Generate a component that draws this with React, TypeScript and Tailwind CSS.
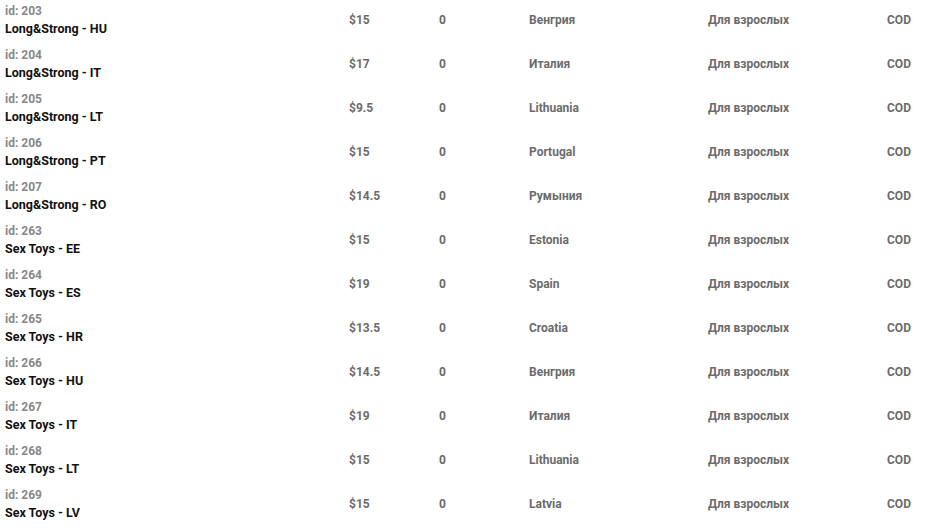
const rows = [
  { id: 203, name: "Long&Strong - HU", price: "$15", country: "Венгрия" },
  { id: 204, name: "Long&Strong - IT", price: "$17", country: "Италия" },
  { id: 205, name: "Long&Strong - LT", price: "$9.5", country: "Lithuania" },
  { id: 206, name: "Long&Strong - PT", price: "$15", country: "Portugal" },
  { id: 207, name: "Long&Strong - RO", price: "$14.5", country: "Румыния" },
  { id: 263, name: "Sex Toys - EE", price: "$15", country: "Estonia" },
  { id: 264, name: "Sex Toys - ES", price: "$19", country: "Spain" },
  { id: 265, name: "Sex Toys - HR", price: "$13.5", country: "Croatia" },
  { id: 266, name: "Sex Toys - HU", price: "$14.5", country: "Венгрия" },
  { id: 267, name: "Sex Toys - IT", price: "$19", country: "Италия" },
  { id: 268, name: "Sex Toys - LT", price: "$15", country: "Lithuania" },
  { id: 269, name: "Sex Toys - LV", price: "$15", country: "Latvia" },
];

export default function App() {
  return (
    <div className="w-[925px] h-[528px] bg-white overflow-hidden font-['Roboto',sans-serif] font-bold text-[12px]">
      <div className="-mt-[2px]">
        {rows.map((r) => (
          <div key={r.id} className="flex items-center h-[44px]">
            <div className="w-[349px] pl-[5px] flex flex-col leading-[18px]">
              <span className="text-[#888888]">id: {r.id}</span>
              <span className="text-[#111111] text-[12.5px]">{r.name}</span>
            </div>
            <div className="w-[90px] text-[#6b6b6b]">{r.price}</div>
            <div className="w-[90px] text-[#6b6b6b]">0</div>
            <div className="w-[179px] text-[#6b6b6b]">{r.country}</div>
            <div className="w-[179px] text-[#6b6b6b]">Для взрослых</div>
            <div className="text-[#6b6b6b]">COD</div>
          </div>
        ))}
      </div>
    </div>
  );
}
